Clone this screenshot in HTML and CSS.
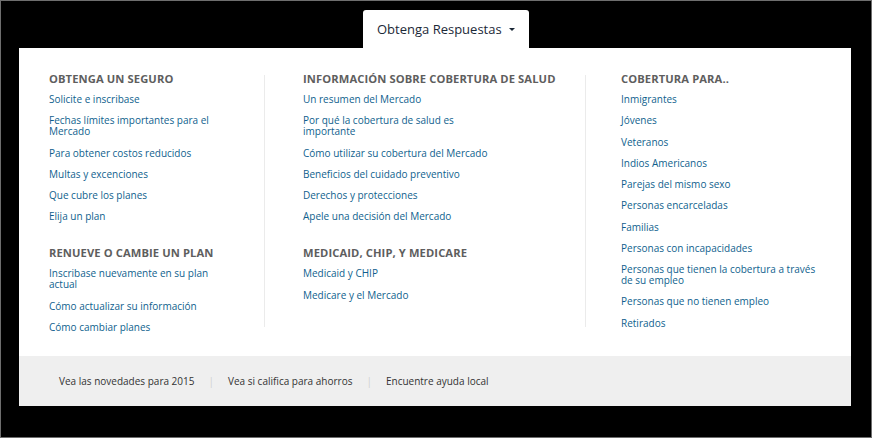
FILE: index.html
```html
<!DOCTYPE html>
<html lang="es">
<head>
<meta charset="utf-8">
<title>Obtenga Respuestas</title>
<link rel="stylesheet" href="styles.css">
</head>
<body>
<div class="frame">
  <div class="tab-row">
    <div class="tab">Obtenga Respuestas <span class="caret"></span></div>
  </div>
  <div class="panel">
    <div class="columns">
      <div class="col col1">
        <div class="section">
          <h3>OBTENGA UN SEGURO</h3>
          <ul>
            <li><a>Solicite e inscribase</a></li>
            <li><a>Fechas límites importantes para el<br>Mercado</a></li>
            <li><a>Para obtener costos reducidos</a></li>
            <li><a>Multas y excenciones</a></li>
            <li><a>Que cubre los planes</a></li>
            <li><a>Elija un plan</a></li>
          </ul>
        </div>
        <div class="section">
          <h3>RENUEVE O CAMBIE UN PLAN</h3>
          <ul>
            <li><a>Inscribase nuevamente en su plan<br>actual</a></li>
            <li><a>Cómo actualizar su información</a></li>
            <li><a>Cómo cambiar planes</a></li>
          </ul>
        </div>
      </div>
      <div class="col col2">
        <div class="section">
          <h3>INFORMACIÓN SOBRE COBERTURA DE SALUD</h3>
          <ul>
            <li><a>Un resumen del Mercado</a></li>
            <li><a>Por qué la cobertura de salud es<br>importante</a></li>
            <li><a>Cómo utilizar su cobertura del Mercado</a></li>
            <li><a>Beneficios del cuidado preventivo</a></li>
            <li><a>Derechos y protecciones</a></li>
            <li><a>Apele una decisión del Mercado</a></li>
          </ul>
        </div>
        <div class="section">
          <h3>MEDICAID, CHIP, Y MEDICARE</h3>
          <ul>
            <li><a>Medicaid y CHIP</a></li>
            <li><a>Medicare y el Mercado</a></li>
          </ul>
        </div>
      </div>
      <div class="col col3">
        <div class="section">
          <h3>COBERTURA PARA..</h3>
          <ul>
            <li><a>Inmigrantes</a></li>
            <li><a>Jóvenes</a></li>
            <li><a>Veteranos</a></li>
            <li><a>Indios Americanos</a></li>
            <li><a>Parejas del mismo sexo</a></li>
            <li><a>Personas encarceladas</a></li>
            <li><a>Familias</a></li>
            <li><a>Personas con incapacidades</a></li>
            <li><a>Personas que tienen la cobertura a través<br>de su empleo</a></li>
            <li><a>Personas que no tienen empleo</a></li>
            <li><a>Retirados</a></li>
          </ul>
        </div>
      </div>
    </div>
  </div>
  <div class="footer">
    <a>Vea las novedades para 2015</a>
    <span class="sep">|</span>
    <a>Vea si califica para ahorros</a>
    <span class="sep">|</span>
    <a>Encuentre ayuda local</a>
  </div>
</div>
</body>
</html>
```
FILE: styles.css
```css
html, body {
  margin: 0;
  padding: 0;
  background: #000;
}
body {
  font-family: "Open Sans", "Liberation Sans", sans-serif;
}
.frame {
  width: 872px;
  height: 438px;
  box-sizing: border-box;
  border: 1px solid #6e6e6e;
  background: #000;
  padding: 9px 20px 0 18px;
}
.tab-row {
  display: flex;
  padding-left: 344px;
}
.tab {
  width: 166px;
  height: 38px;
  box-sizing: border-box;
  background: #fff;
  border-radius: 3px 3px 0 0;
  padding-left: 14px;
  display: flex;
  align-items: center;
  gap: 6px;
  font-size: 13px;
  color: #1b2837;
}
.caret {
  width: 0;
  height: 0;
  border-left: 3px solid transparent;
  border-right: 3px solid transparent;
  border-top: 3px solid #1b2837;
  margin-left: 1px;
}
.panel {
  background: #fff;
  height: 308px;
  box-sizing: border-box;
  padding: 27px 0 0 30px;
}
.columns {
  display: grid;
  grid-template-columns: 215px 321px 1fr;
}
.col {
  height: 252px;
}
.col2, .col3 {
  border-left: 1px solid #ebebeb;
}
.col2 { padding-left: 38px; }
.col3 { padding-left: 35px; }
.section:first-child {
  margin-top: -4px;
}
.section + .section {
  margin-top: 23px;
}
h3 {
  margin: 0;
  font-size: 11.2px;
  line-height: 16px;
  font-weight: 700;
  color: #5e5e5e;
  letter-spacing: 0.1px;
}
ul {
  list-style: none;
  margin: 7px 0 0;
  padding: 0;
  display: flex;
  flex-direction: column;
  gap: 10.25px;
}
li {
  font-size: 10px;
  line-height: 11px;
}
li a {
  color: #0f5f8e;
}
.footer {
  background: #efefef;
  height: 50px;
  display: flex;
  align-items: center;
  padding-left: 40px;
  gap: 14px;
  font-size: 10px;
  color: #333;
}
.sep {
  color: #cfcfcf;
}
```
